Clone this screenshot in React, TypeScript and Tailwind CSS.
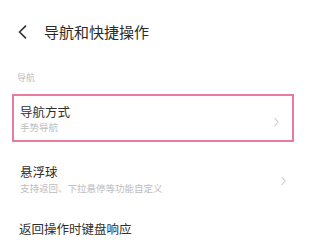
import React from "react";

function Chevron({ className }: { className?: string }) {
  return (
    <svg viewBox="0 0 8 12" className={className} fill="none" stroke="currentColor" strokeWidth="1.3" strokeLinecap="round" strokeLinejoin="round">
      <path d="M2 1.5 L6 6 L2 10.5" />
    </svg>
  );
}

export default function App() {
  return (
    <div
      className="w-[325px] h-[245px] overflow-hidden bg-white"
      style={{ fontFamily: '"Noto Sans CJK SC", "Noto Sans", sans-serif' }}
    >
      <div className="h-[22px]" />
      <div className="flex items-center h-[20px] pl-[17px]">
        <svg viewBox="0 0 11 14" className="w-[11px] h-[14px] text-[#333]" fill="none" stroke="currentColor" strokeWidth="1.7" strokeLinecap="round" strokeLinejoin="round">
          <path d="M8.5 1.2 L2.5 7 L8.5 12.8" />
        </svg>
        <span className="ml-[16px] text-[15px] leading-[20px] text-[#2a2a2a]">导航和快捷操作</span>
      </div>
      <div className="h-[30px]" />
      <div className="pl-[17px] h-[12px] text-[9px] leading-[12px] text-[#bcbcbc]">导航</div>
      <div className="h-[10px]" />
      <div className="ml-[12px] w-[282px] h-[48px] border-2 border-[#e97b9c] flex items-center pl-[6px] pr-[12px]">
        <div className="flex-1 flex flex-col">
          <span className="text-[12.5px] leading-[16px] text-[#2f2f2f] mt-[2px]">导航方式</span>
          <span className="text-[9.5px] leading-[14px] text-[#bcbcbc]">手势导航</span>
        </div>
        <Chevron className="w-[7px] h-[10px] text-[#c8c8c8] mt-[8px]" />
      </div>
      <div className="h-[20px]" />
      <div className="flex items-center h-[36px] pl-[20px] pr-[38px]">
        <div className="flex-1 flex flex-col">
          <span className="text-[12.5px] leading-[16px] text-[#2f2f2f]">悬浮球</span>
          <span className="text-[9.5px] leading-[16px] text-[#bcbcbc]">支持返回、下拉悬停等功能自定义</span>
        </div>
        <Chevron className="w-[7px] h-[10px] text-[#c8c8c8] mt-[2px]" />
      </div>
      <div className="h-[23px]" />
      <div className="pl-[19px] text-[12.5px] leading-[16px] text-[#2f2f2f]">返回操作时键盘响应</div>
    </div>
  );
}
